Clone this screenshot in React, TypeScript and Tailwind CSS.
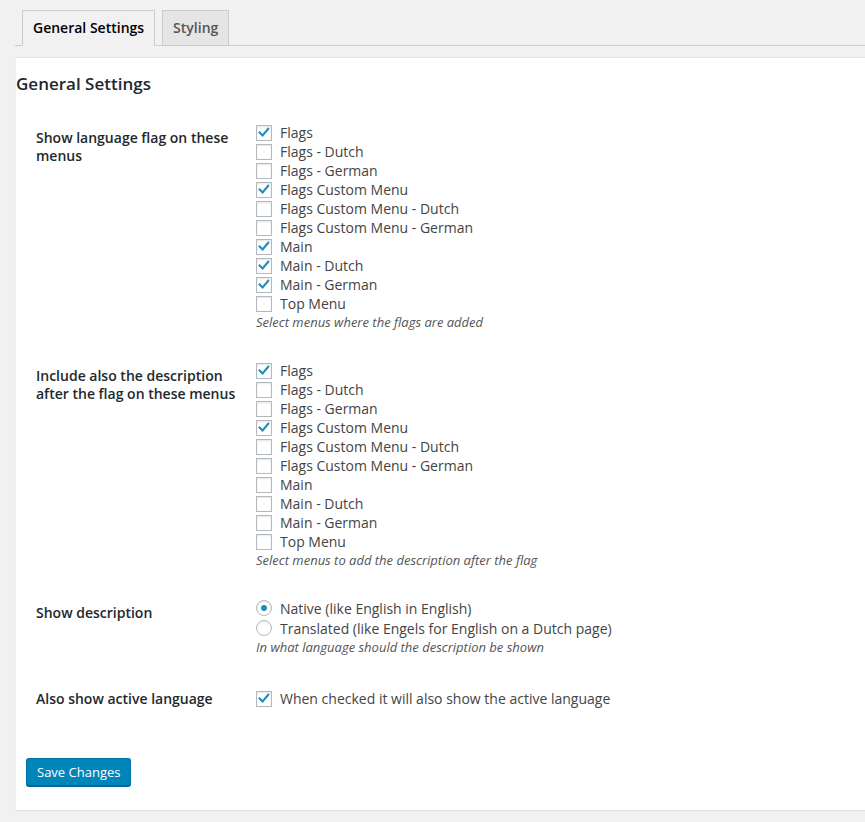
import React from "react";

const menus = [
  "Flags",
  "Flags - Dutch",
  "Flags - German",
  "Flags Custom Menu",
  "Flags Custom Menu - Dutch",
  "Flags Custom Menu - German",
  "Main",
  "Main - Dutch",
  "Main - German",
  "Top Menu",
];

const flagChecked = ["Flags", "Flags Custom Menu", "Main", "Main - Dutch", "Main - German"];
const descChecked = ["Flags", "Flags Custom Menu"];

function CheckBox({ checked }: { checked: boolean }) {
  return (
    <span className="w-4 h-4 shrink-0 border border-[#b4b9be] bg-white shadow-[inset_0_1px_2px_rgba(0,0,0,0.1)] flex items-center justify-center">
      {checked && (
        <svg viewBox="0 0 16 16" className="w-[15px] h-[15px]">
          <path d="M3 8 L6.4 11.4 L12.8 3.8" fill="none" stroke="#1e8cbe" strokeWidth={2.4} strokeLinecap="square" />
        </svg>
      )}
    </span>
  );
}

function Radio({ checked }: { checked: boolean }) {
  return (
    <span className="w-4 h-4 shrink-0 rounded-full border border-[#b4b9be] bg-white shadow-[inset_0_1px_2px_rgba(0,0,0,0.1)] flex items-center justify-center">
      {checked && <span className="w-[6px] h-[6px] rounded-full bg-[#1e8cbe]" />}
    </span>
  );
}

function Row({ label, labelPad = "pt-[6px]", children }: { label: React.ReactNode; labelPad?: string; children: React.ReactNode }) {
  return (
    <div className="flex">
      <div className={`w-[230px] pl-[10px] pr-[10px] text-[14px] leading-[18px] font-semibold text-[#23282d] ${labelPad}`}>{label}</div>
      <div className="flex flex-col">{children}</div>
    </div>
  );
}

function CheckList({ checked }: { checked: string[] }) {
  return (
    <>
      {menus.map((m) => (
        <label key={m} className="flex items-center gap-2 h-[19px] text-[14px] text-[#444]">
          <CheckBox checked={checked.includes(m)} />
          <span>{m}</span>
        </label>
      ))}
    </>
  );
}

function Desc({ children }: { children: React.ReactNode }) {
  return <p className="h-[19px] leading-[19px] text-[13px] italic text-[#555]">{children}</p>;
}

export default function App() {
  return (
    <div className="min-h-screen bg-[#f1f1f1] overflow-hidden" style={{ fontFamily: '"Open Sans", sans-serif' }}>
      {/* Tabs */}
      <div className="pt-[10px] ml-[15px] border-b border-[#ccc] flex gap-[7px] pl-[7px]">
        <div className="-mb-px px-[10px] py-[5px] leading-[24px] text-[14px] font-semibold text-black bg-[#f1f1f1] border border-[#ccc] border-b-[#f1f1f1]">
          General Settings
        </div>
        <div className="-mb-px px-[10px] py-[5px] leading-[24px] text-[14px] font-semibold text-[#555] bg-[#e5e5e5] border border-[#ccc]">
          Styling
        </div>
      </div>

      {/* Panel */}
      <div className="ml-[16px] mt-[11px] mb-[12px] bg-white border-t border-[#e5e5e5] shadow-[0_1px_1px_rgba(0,0,0,0.06)] pt-[14px] pb-[24px]">
        <h2 className="text-[17px] leading-[23px] font-semibold text-[#23282d]">General Settings</h2>

        <div className="pl-[10px] mt-[28px] flex flex-col">
          <Row label={<>Show language flag on these<br />menus</>}>
            <CheckList checked={flagChecked} />
            <Desc>Select menus where the flags are added</Desc>
          </Row>

          <div className="h-[29px]" />

          <Row label={<>Include also the description<br />after the flag on these menus</>}>
            <CheckList checked={descChecked} />
            <Desc>Select menus to add the description after the flag</Desc>
          </Row>

          <div className="h-[28px]" />

          <Row label="Show description">
            <label className="flex items-center gap-2 h-[20px] text-[14px] text-[#444]">
              <Radio checked />
              <span>Native (like English in English)</span>
            </label>
            <label className="flex items-center gap-2 h-[20px] text-[14px] text-[#444]">
              <Radio checked={false} />
              <span>Translated (like Engels for English on a Dutch page)</span>
            </label>
            <Desc>In what language should the description be shown</Desc>
          </Row>

          <div className="h-[32px]" />

          <Row label="Also show active language" labelPad="pt-[1px]">
            <label className="flex items-center gap-2 h-[19px] text-[14px] text-[#444]">
              <CheckBox checked />
              <span>When checked it will also show the active language</span>
            </label>
          </Row>

          <div className="mt-[50px]">
            <button className="h-[28px] px-[10px] rounded-[3px] bg-[#0085ba] border border-[#0073aa] border-b-[#006799] shadow-[0_1px_0_#006799] text-white text-[13px] leading-[26px]">
              Save Changes
            </button>
          </div>
        </div>
      </div>
    </div>
  );
}
